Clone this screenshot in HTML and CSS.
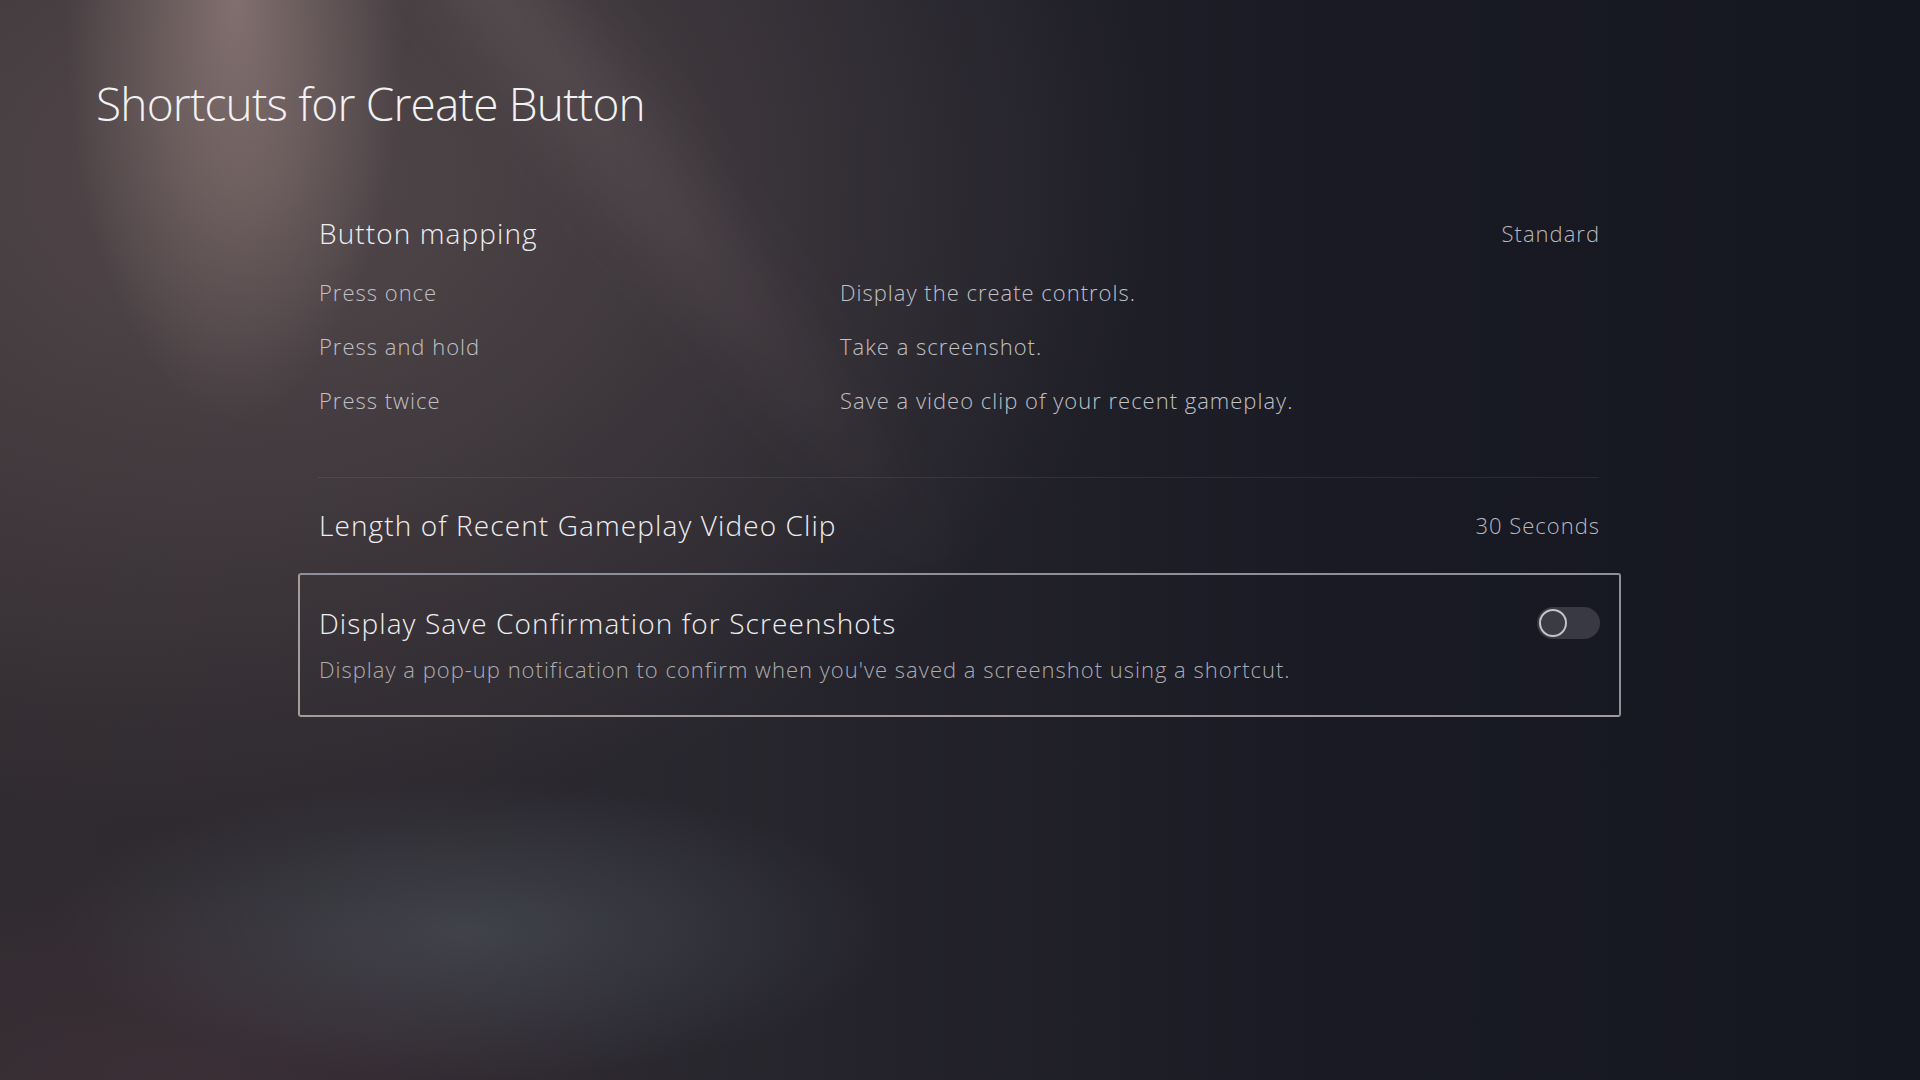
FILE: index.html
```html
<!DOCTYPE html>
<html lang="en">
<head>
  <meta charset="UTF-8" />
  <meta name="viewport" content="width=device-width, initial-scale=1.0"/>
  <title>Shortcuts for Create Button</title>
  <link rel="stylesheet" href="styles.css">
</head>
<body>
  <div class="beam"></div>

  <main class="screen">
    <h1 class="title">Shortcuts for Create Button</h1>

    <div class="settings">
      <div class="row">
        <span class="label">Button mapping</span>
        <span class="value">Standard</span>
      </div>
      <div class="mapping">
        <div class="map-row">
          <span class="map-key">Press once</span>
          <span class="map-action">Display the create controls.</span>
        </div>
        <div class="map-row">
          <span class="map-key">Press and hold</span>
          <span class="map-action">Take a screenshot.</span>
        </div>
        <div class="map-row">
          <span class="map-key">Press twice</span>
          <span class="map-action">Save a video clip of your recent gameplay.</span>
        </div>
      </div>

      <hr class="divider">

      <div class="row">
        <span class="label">Length of Recent Gameplay Video Clip</span>
        <span class="value">30 Seconds</span>
      </div>

      <div class="row focused">
        <div class="text">
          <div class="label">Display Save Confirmation for Screenshots</div>
          <div class="desc">Display a pop-up notification to confirm when you've saved a screenshot using a shortcut.</div>
        </div>
        <div class="toggle"><span class="knob"></span></div>
      </div>
    </div>
  </main>
</body>
</html>
```

FILE: styles.css
```css
body {
  margin: 0;
  height: 1080px;
  overflow: hidden;
  font-family: 'Open Sans', 'Noto Sans', sans-serif;
  font-weight: 300;
  color: #ececee;
  background:
    radial-gradient(ellipse 170px 420px at 235px 0, rgba(175, 150, 145, 0.55), transparent),
    radial-gradient(ellipse 900px 650px at 260px 180px, rgba(115, 98, 98, 0.55), transparent),
    radial-gradient(ellipse 420px 150px at 470px 930px, rgba(95, 105, 115, 0.4), transparent),
    radial-gradient(ellipse 500px 200px at 200px 1080px, rgba(90, 60, 70, 0.3), transparent),
    linear-gradient(to right, #302b30 0%, #29272e 35%, #191a24 70%, #141620 100%);
  position: relative;
}

.beam {
  position: absolute;
  left: 330px;
  top: -120px;
  width: 160px;
  height: 900px;
  background: radial-gradient(ellipse at 50% 0, rgba(160, 140, 140, 0.22), transparent 70%);
  transform: rotate(-38deg);
  transform-origin: top center;
  filter: blur(20px);
  pointer-events: none;
}

.screen {
  position: relative;
  padding-top: 73px;
}

.title {
  margin: 0 0 0 96px;
  font-size: 46px;
  line-height: 60px;
  font-weight: 300;
  letter-spacing: -0.8px;
  color: #f2f2f2;
}

.settings {
  margin: 80px 0 0 298px;
  width: 1323px;
}

.row {
  display: flex;
  justify-content: space-between;
  align-items: center;
  padding: 0 21px;
}

.label {
  font-size: 28px;
  line-height: 40px;
  letter-spacing: 1.1px;
  color: #eeeef0;
}

.value {
  font-size: 22px;
  line-height: 40px;
  letter-spacing: 1px;
  color: #b9b9bf;
}

.mapping {
  margin-top: 12px;
  padding: 0 21px;
}

.map-row {
  display: flex;
  font-size: 22px;
  line-height: 54px;
  letter-spacing: 1px;
  color: #c0c0c5;
}

.map-key {
  width: 521px;
}

.divider {
  margin: 50px 22px 27px 20px;
  border: none;
  height: 1px;
  background: rgba(255, 255, 255, 0.08);
}

.focused {
  margin-top: 28px;
  padding: 28px 19px 31px;
  border: 2px solid #8d8f99;
  border-bottom-color: #a39c98;
  border-left-color: #a59d97;
  border-radius: 3px;
}

.desc {
  margin-top: 11px;
  font-size: 22px;
  line-height: 30px;
  letter-spacing: 1px;
  color: #acacb3;
}

.toggle {
  align-self: flex-start;
  margin-top: 4px;
  width: 63px;
  height: 32px;
  border-radius: 16px;
  background: #393944;
  display: flex;
  align-items: center;
  padding-left: 2px;
  box-sizing: border-box;
}

.knob {
  width: 24px;
  height: 24px;
  border-radius: 50%;
  border: 2px solid #c4c4c8;
  background: #3b3b44;
}
```
